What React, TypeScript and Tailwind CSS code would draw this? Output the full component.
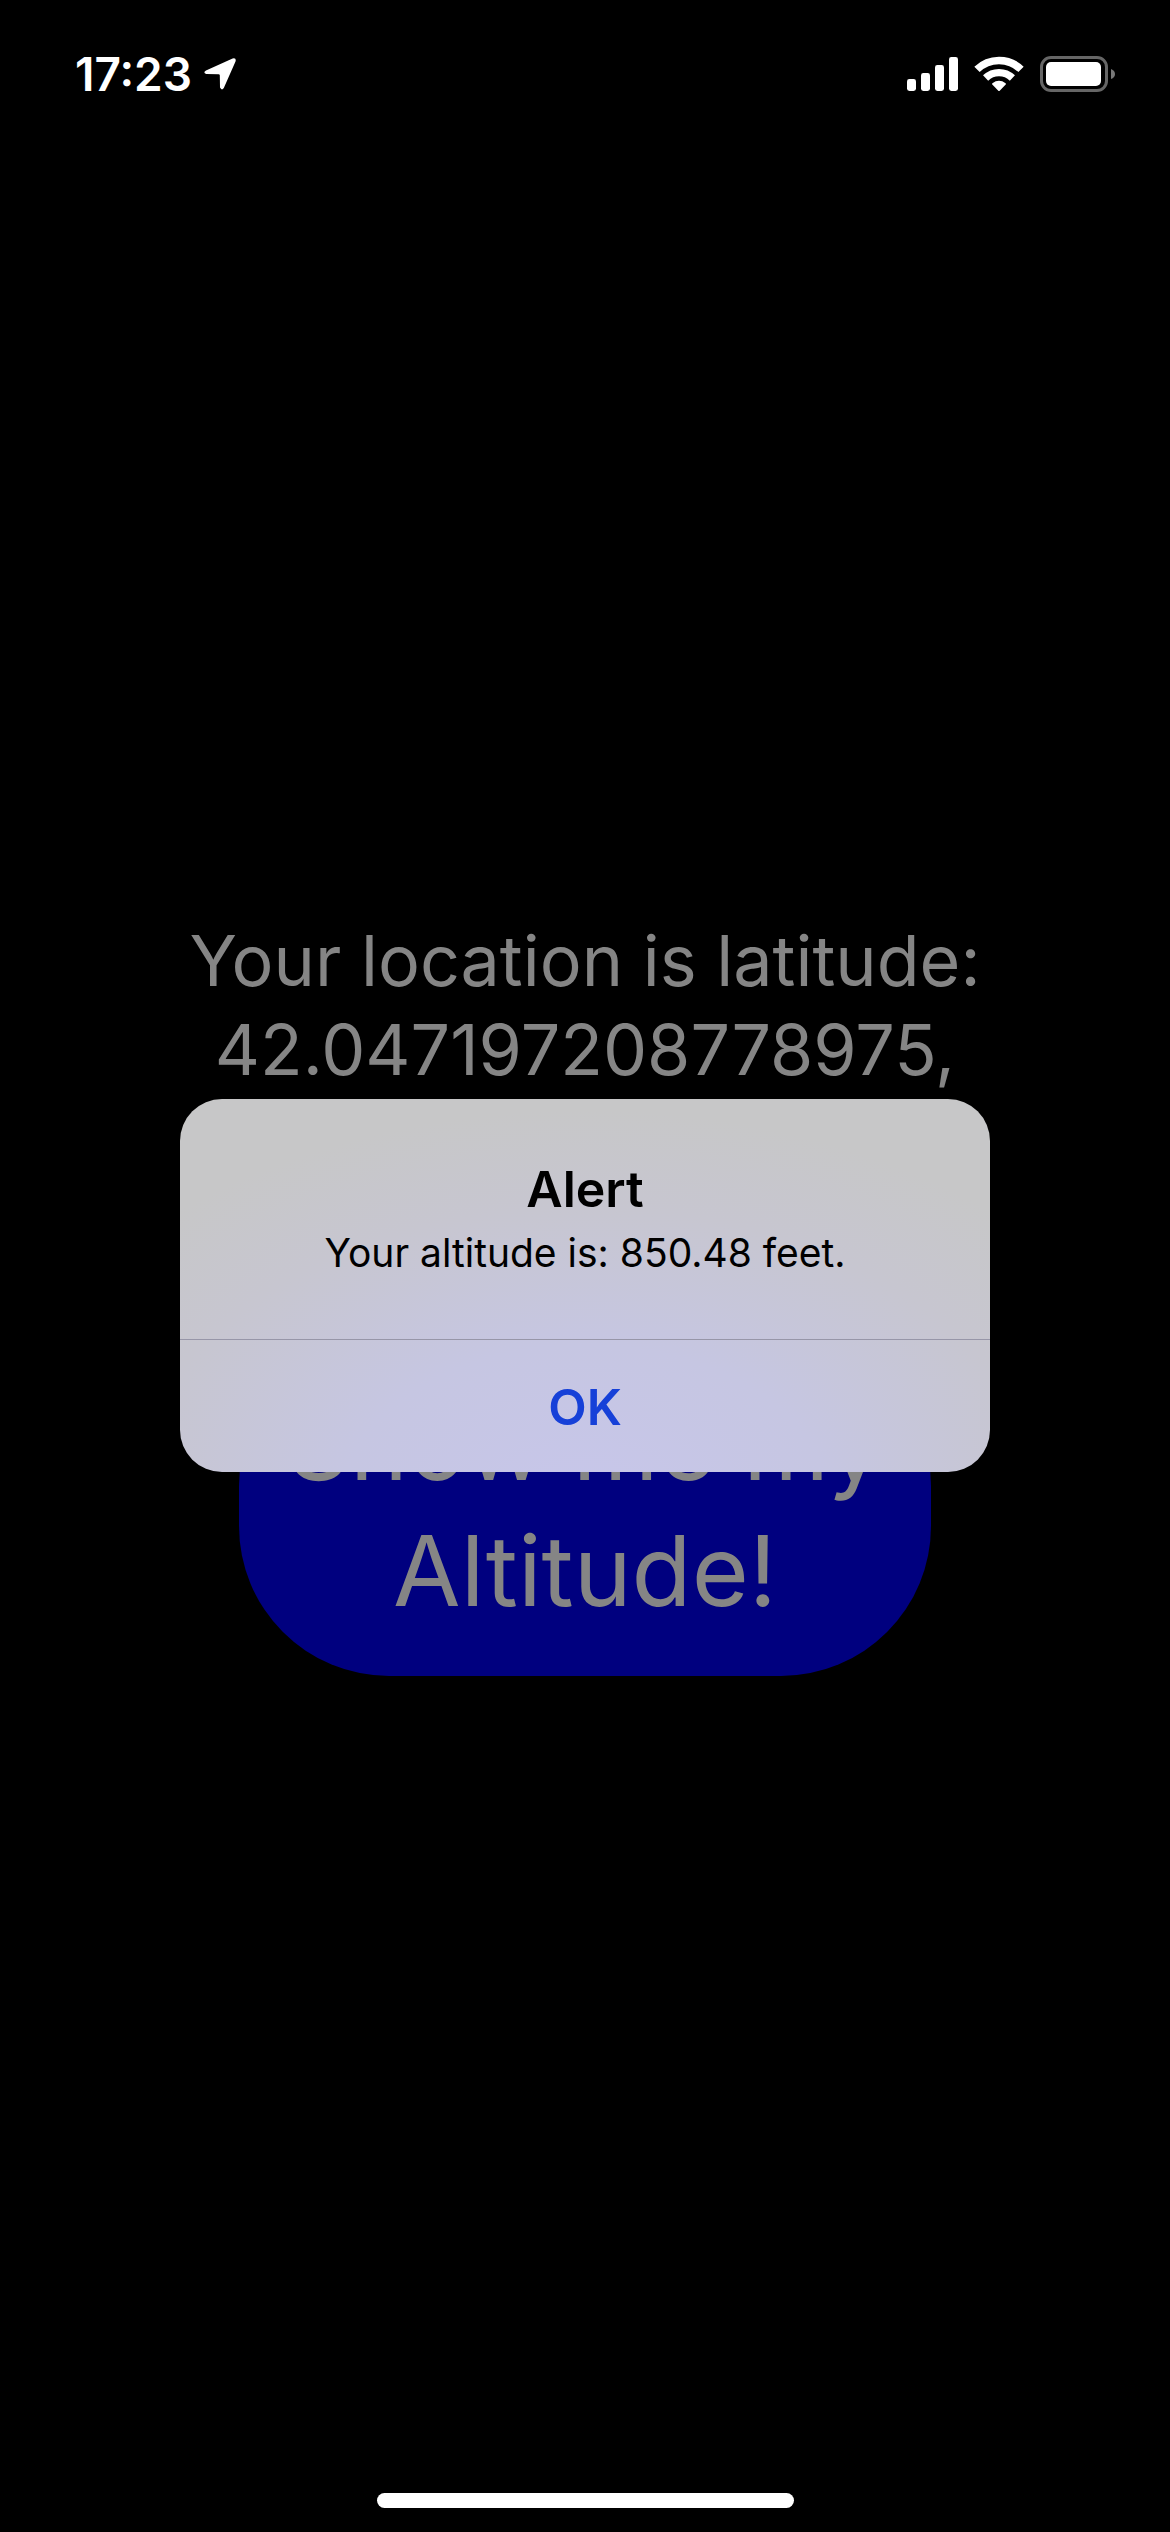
function LocationArrow() {
  return (
    <svg className="ml-3 h-8 w-8" viewBox="0 0 32 32" fill="white" aria-hidden="true">
      <path d="M2 12.4 L28.6 .4 Q32.6 -.6 31.5 3.4 L19.8 30 Q17.8 33 16 29.6 L15.8 17.3 Q15.7 16.2 14.6 16.2 L2.2 16 Q-1.4 14.4 2 12.4 Z" />
    </svg>
  );
}

function Signal() {
  return (
    <svg className="h-9 w-[51px]" viewBox="0 0 51 36" fill="white" aria-hidden="true">
      <rect x="0" y="23" width="9" height="12" rx="2.4" />
      <rect x="14" y="17" width="9" height="18" rx="2.4" />
      <rect x="28" y="9" width="9" height="26" rx="2.4" />
      <rect x="42" y="1" width="9" height="34" rx="2.4" />
    </svg>
  );
}

function Wifi() {
  return (
    <svg className="ml-4 h-9 w-[50px]" viewBox="0 0 50 36" aria-hidden="true">
      <path d="M3 13.4 A31.5 31.5 0 0 1 47 13.4" fill="none" stroke="white" strokeWidth="7.6" />
      <path d="M11.6 22 A19.3 19.3 0 0 1 38.4 22" fill="none" stroke="white" strokeWidth="7.4" />
      <path d="M18.3 28.6 Q17.6 27.9 18.4 27.3 Q25 22.4 31.6 27.3 Q32.4 27.9 31.7 28.6 L25.7 34.7 Q25 35.3 24.3 34.7 Z" fill="white" />
    </svg>
  );
}

function Battery() {
  return (
    <svg className="ml-4 h-9 w-[76px]" viewBox="0 0 76 36" aria-hidden="true">
      <rect x="1.5" y="1.5" width="65" height="33" rx="9.5" fill="none" stroke="#666" strokeWidth="3" />
      <rect x="6" y="6" width="55" height="24" rx="5" fill="white" />
      <path d="M71 13 Q75 14.5 75 18 Q75 21.5 71 23 Z" fill="#777" />
    </svg>
  );
}

export default function App() {
  return (
    <div className="relative flex min-h-screen flex-col bg-black font-['Inter',sans-serif]">
      <header className="flex h-[141px] items-start justify-between pt-14 pr-[54px] pl-[75px]">
        <div className="flex h-9 items-center text-white">
          <time className="text-[46px] leading-9 font-semibold">17:23</time>
          <LocationArrow />
        </div>
        <div className="flex h-9 items-center">
          <Signal />
          <Wifi />
          <Battery />
        </div>
      </header>

      <main className="flex flex-1 flex-col items-center justify-center text-center text-[#858585]">
        <p className="min-h-[440px] max-w-[840px] pt-5 text-[70px] leading-[89px]">
          Your location is latitude: 42.047197208778975,
        </p>
        <button
          type="button"
          className="w-[692px] max-w-full rounded-[150px] bg-[#00007f] px-8 pt-[46px] pb-[42px] text-[98px] leading-[126px]"
        >
          Show me my Altitude!
        </button>
      </main>

      <footer className="flex h-[102px] items-end justify-center pb-6">
        <div className="h-[15px] w-[417px] rounded-full bg-white" />
      </footer>

      <div className="absolute inset-0 flex items-center justify-center pt-[141px] pb-[102px]">
        <section
          role="alertdialog"
          aria-labelledby="alert-title"
          aria-describedby="alert-message"
          className="w-[810px] max-w-full overflow-hidden rounded-[42px] bg-[radial-gradient(ellipse_75%_105%_at_50%_108%,#c7c6ea_0%,#c6c6e2_40%,#c7c6d0_75%,#c7c7c8_100%)] text-center text-black"
        >
          <div className="px-12 py-[60px]">
            <h1 id="alert-title" className="text-[50px] leading-[60px] font-semibold">
              Alert
            </h1>
            <p id="alert-message" className="pt-2 text-[39px] leading-[52px]">
              Your altitude is: 850.48 feet.
            </p>
          </div>
          <button
            type="button"
            className="h-[133px] w-full border-t border-[#9796a8] pt-0.5 text-[50px] leading-[60px] font-semibold text-[#1640d8]"
          >
            OK
          </button>
        </section>
      </div>
    </div>
  );
}
